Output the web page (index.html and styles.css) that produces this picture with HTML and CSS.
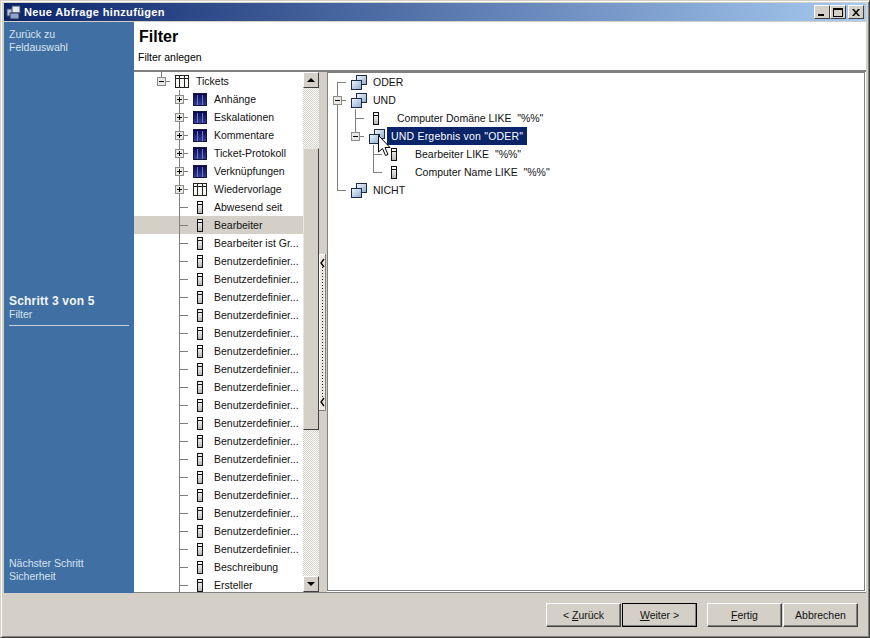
FILE: index.html
```html
<!DOCTYPE html>
<html lang="de">
  <head>
    <meta charset="UTF-8" />
    <title>Neue Abfrage hinzufügen</title>
    <link rel="stylesheet" href="styles.css">
  </head>
  <body>
    <svg class="defs" width="0" height="0">
      <defs>
        <linearGradient id="g-blue" x1="0" y1="0" x2="0" y2="1">
          <stop offset="0" stop-color="#06064e" />
          <stop offset="1" stop-color="#343f9a" />
        </linearGradient>
        <linearGradient id="g-field" x1="0" y1="0" x2="0" y2="1">
          <stop offset="0" stop-color="#ffffff" />
          <stop offset="1" stop-color="#b4b4b4" />
        </linearGradient>
        <linearGradient id="g-group" x1="0" y1="0" x2="1" y2="1">
          <stop offset="0" stop-color="#f4f8fc" />
          <stop offset="1" stop-color="#8aaad2" />
        </linearGradient>
        <symbol id="i-table" viewBox="0 0 14 13">
          <rect x="0.5" y="0.5" width="13" height="12" fill="#f8f8f4" stroke="#222" />
          <path d="M0.5 3.5H13.5M4.5 0.5V12.5M9.5 0.5V12.5" fill="none" stroke="#222" />
        </symbol>
        <symbol id="i-blue" viewBox="0 0 14 13">
          <rect x="0.5" y="0.5" width="13" height="12" fill="url(#g-blue)" stroke="#14143c" />
          <path d="M4.5 2V12M9.5 2V12" fill="none" stroke="#7078c4" />
        </symbol>
        <symbol id="i-field" viewBox="0 0 6 13">
          <rect x="0.5" y="0.5" width="5" height="12" fill="url(#g-field)" stroke="#111" />
          <path d="M0.5 3.5H5.5" fill="none" stroke="#111" />
        </symbol>
        <symbol id="i-group" viewBox="0 0 16 15">
          <rect x="5.5" y="0.5" width="10" height="9" fill="url(#g-group)" stroke="#1c2a44" />
          <rect x="0.5" y="5.5" width="10" height="9" fill="url(#g-group)" stroke="#1c2a44" />
        </symbol>
      </defs>
    </svg>

    <div class="window">
      <div class="titlebar">
        <svg class="app-icon" width="16" height="15" viewBox="0 0 16 15">
          <rect x="1" y="4" width="7" height="7" fill="#b8c4d8" stroke="#3c4c6c" />
          <rect x="6" y="1" width="8" height="7" fill="#e4e8f0" stroke="#3c4c6c" />
          <rect x="4" y="8" width="9" height="6" fill="#8ea4c8" stroke="#26324c" />
        </svg>
        <span class="title">Neue Abfrage hinzufügen</span>
        <div class="caption-btns">
          <div class="cap-btn"><span class="cap-min"></span></div>
          <div class="cap-btn"><span class="cap-max"></span></div>
          <div class="cap-btn cap-close-btn">
            <svg width="8" height="7" viewBox="0 0 8 7"><path d="M0 0H2L4 2.4L6 0H8L5 3.5L8 7H6L4 4.6L2 7H0L3 3.5Z" fill="#000" /></svg>
          </div>
        </div>
      </div>

      <div class="wizard">
        <div class="side">
          <div class="side-back">Zurück zu<br />Feldauswahl</div>
          <div class="side-step">
            <div class="step-num">Schritt 3 von 5</div>
            <div class="step-name">Filter</div>
          </div>
          <div class="side-next">Nächster Schritt<br />Sicherheit</div>
        </div>

        <div class="content">
          <div class="header">
            <div class="header-title">Filter</div>
            <div class="header-sub">Filter anlegen</div>
          </div>

          <div class="panes">
            <div class="ltree">
              <div class="row lvl1"><span class="cell ln-l"><span class="exp minus"></span></span><svg class="ic-tbl"><use href="#i-table" /></svg>Tickets</div>
              <div class="row lvl2"><span class="cell ln-t"><span class="exp plus"></span></span><svg class="ic-tbl"><use href="#i-blue" /></svg>Anhänge</div>
              <div class="row lvl2"><span class="cell ln-t"><span class="exp plus"></span></span><svg class="ic-tbl"><use href="#i-blue" /></svg>Eskalationen</div>
              <div class="row lvl2"><span class="cell ln-t"><span class="exp plus"></span></span><svg class="ic-tbl"><use href="#i-blue" /></svg>Kommentare</div>
              <div class="row lvl2"><span class="cell ln-t"><span class="exp plus"></span></span><svg class="ic-tbl"><use href="#i-blue" /></svg>Ticket-Protokoll</div>
              <div class="row lvl2"><span class="cell ln-t"><span class="exp plus"></span></span><svg class="ic-tbl"><use href="#i-blue" /></svg>Verknüpfungen</div>
              <div class="row lvl2"><span class="cell ln-t"><span class="exp plus"></span></span><svg class="ic-tbl"><use href="#i-table" /></svg>Wiedervorlage</div>
              <div class="row lvl2"><span class="cell ln-t"></span><svg class="ic-fld"><use href="#i-field" /></svg>Abwesend seit</div>
              <div class="row lvl2 selected"><span class="cell ln-t"></span><svg class="ic-fld"><use href="#i-field" /></svg>Bearbeiter</div>
              <div class="row lvl2"><span class="cell ln-t"></span><svg class="ic-fld"><use href="#i-field" /></svg>Bearbeiter ist Gr...</div>
              <div class="row lvl2"><span class="cell ln-t"></span><svg class="ic-fld"><use href="#i-field" /></svg>Benutzerdefinier...</div>
              <div class="row lvl2"><span class="cell ln-t"></span><svg class="ic-fld"><use href="#i-field" /></svg>Benutzerdefinier...</div>
              <div class="row lvl2"><span class="cell ln-t"></span><svg class="ic-fld"><use href="#i-field" /></svg>Benutzerdefinier...</div>
              <div class="row lvl2"><span class="cell ln-t"></span><svg class="ic-fld"><use href="#i-field" /></svg>Benutzerdefinier...</div>
              <div class="row lvl2"><span class="cell ln-t"></span><svg class="ic-fld"><use href="#i-field" /></svg>Benutzerdefinier...</div>
              <div class="row lvl2"><span class="cell ln-t"></span><svg class="ic-fld"><use href="#i-field" /></svg>Benutzerdefinier...</div>
              <div class="row lvl2"><span class="cell ln-t"></span><svg class="ic-fld"><use href="#i-field" /></svg>Benutzerdefinier...</div>
              <div class="row lvl2"><span class="cell ln-t"></span><svg class="ic-fld"><use href="#i-field" /></svg>Benutzerdefinier...</div>
              <div class="row lvl2"><span class="cell ln-t"></span><svg class="ic-fld"><use href="#i-field" /></svg>Benutzerdefinier...</div>
              <div class="row lvl2"><span class="cell ln-t"></span><svg class="ic-fld"><use href="#i-field" /></svg>Benutzerdefinier...</div>
              <div class="row lvl2"><span class="cell ln-t"></span><svg class="ic-fld"><use href="#i-field" /></svg>Benutzerdefinier...</div>
              <div class="row lvl2"><span class="cell ln-t"></span><svg class="ic-fld"><use href="#i-field" /></svg>Benutzerdefinier...</div>
              <div class="row lvl2"><span class="cell ln-t"></span><svg class="ic-fld"><use href="#i-field" /></svg>Benutzerdefinier...</div>
              <div class="row lvl2"><span class="cell ln-t"></span><svg class="ic-fld"><use href="#i-field" /></svg>Benutzerdefinier...</div>
              <div class="row lvl2"><span class="cell ln-t"></span><svg class="ic-fld"><use href="#i-field" /></svg>Benutzerdefinier...</div>
              <div class="row lvl2"><span class="cell ln-t"></span><svg class="ic-fld"><use href="#i-field" /></svg>Benutzerdefinier...</div>
              <div class="row lvl2"><span class="cell ln-t"></span><svg class="ic-fld"><use href="#i-field" /></svg>Benutzerdefinier...</div>
              <div class="row lvl2"><span class="cell ln-t"></span><svg class="ic-fld"><use href="#i-field" /></svg>Beschreibung</div>
              <div class="row lvl2"><span class="cell ln-t"></span><svg class="ic-fld"><use href="#i-field" /></svg>Ersteller</div>
            </div>

            <div class="scrollbar">
              <div class="sb-btn"><span class="arrow-up"></span></div>
              <div class="sb-track"><div class="sb-thumb"></div></div>
              <div class="sb-btn"><span class="arrow-down"></span></div>
            </div>

            <div class="splitter">
              <svg class="grip" width="7" height="157" viewBox="0 0 7 157">
                <rect x="0" y="0" width="7" height="157" fill="#ece9e2" />
                <path d="M0.5 157V0.5H7" fill="none" stroke="#ffffff" />
                <path d="M0 156.5H6.5V0" fill="none" stroke="#808080" />
                <path d="M3.5 13V144" fill="none" stroke="#222" stroke-dasharray="1 2" />
                <path d="M5 5L2 9L5 13M5 144L2 148L5 152" fill="none" stroke="#000" stroke-width="1.4" />
              </svg>
            </div>

            <div class="rtree">
              <div class="row"><span class="cell ln-r"></span><svg class="ic-grp"><use href="#i-group" /></svg><span class="lbl">ODER</span></div>
              <div class="row"><span class="cell ln-t"><span class="exp minus"></span></span><svg class="ic-grp"><use href="#i-group" /></svg><span class="lbl">UND</span></div>
              <div class="row"><span class="cell ln-v"></span><span class="cell ln-t"></span><svg class="ic-rfld"><use href="#i-field" /></svg><span class="lbl">Computer Domäne LIKE  "%%"</span></div>
              <div class="row"><span class="cell ln-v"></span><span class="cell ln-l"><span class="exp minus"></span></span><svg class="ic-grp"><use href="#i-group" /></svg><span class="lbl lbl-sel">UND Ergebnis von "ODER"</span></div>
              <div class="row"><span class="cell ln-v"></span><span class="cell"></span><span class="cell ln-t"></span><svg class="ic-rfld"><use href="#i-field" /></svg><span class="lbl">Bearbeiter LIKE  "%%"</span></div>
              <div class="row"><span class="cell ln-v"></span><span class="cell"></span><span class="cell ln-l"></span><svg class="ic-rfld"><use href="#i-field" /></svg><span class="lbl">Computer Name LIKE  "%%"</span></div>
              <div class="row"><span class="cell ln-l"></span><svg class="ic-grp"><use href="#i-group" /></svg><span class="lbl">NICHT</span></div>
              <svg class="cursor" width="13" height="22" viewBox="0 0 13 22">
                <path d="M0.5 0.5V17L4.5 13.5L7.5 20.5L10 19.5L7 12.5H12Z" fill="#fff" stroke="#000" />
              </svg>
            </div>
          </div>
        </div>
      </div>

      <div class="footer">
        <button class="btn">&lt; <u>Z</u>urück</button>
        <button class="btn btn-default"><u>W</u>eiter &gt;</button>
        <button class="btn btn-finish"><u>F</u>ertig</button>
        <button class="btn">Abbrechen</button>
      </div>
    </div>
  </body>
</html>
```

FILE: styles.css
```css
* {
  box-sizing: border-box;
}
html,
body {
  margin: 0;
  height: 100%;
  overflow: hidden;
}
body {
  font-family: "Liberation Sans", Arial, sans-serif;
  font-size: 10.5px;
  color: #111;
  background: #d4d0c8;
}
.defs {
  display: block;
  height: 0;
}
.window {
  height: 638px;
  display: flex;
  flex-direction: column;
  padding: 2px 3px 0 3px;
  background: #d4d0c8;
  border: 1px solid;
  border-color: #d4d0c8 #404040 #404040 #d4d0c8;
  box-shadow: inset 1px 1px 0 #fff, inset -1px -1px 0 #808080;
}

/* title bar */
.titlebar {
  height: 18px;
  margin-bottom: 1px;
  flex: none;
  display: flex;
  align-items: center;
  padding: 0 2px;
  background: linear-gradient(to right, #0a246a, #a6caf0);
}
.app-icon {
  flex: none;
}
.title {
  margin-left: 2px;
  color: #fff;
  font-weight: 700;
  font-size: 11px;
  letter-spacing: 0.35px;
}
.caption-btns {
  margin-left: auto;
  display: flex;
}
.cap-btn {
  width: 16px;
  height: 14px;
  display: flex;
  align-items: center;
  justify-content: center;
  background: #d4d0c8;
  border: 1px solid;
  border-color: #fff #404040 #404040 #fff;
}
.cap-close-btn {
  margin-left: 2px;
}
.cap-min {
  width: 6px;
  height: 2px;
  margin: 6px 3px 0 0;
  background: #000;
}
.cap-max {
  width: 10px;
  height: 9px;
  border: 1px solid #000;
  border-top-width: 2px;
}

/* wizard body */
.wizard {
  flex: none;
  height: 571px;
  display: flex;
}
.side {
  width: 130px;
  flex: none;
  display: flex;
  flex-direction: column;
  background: #3f6fa3;
  color: #d8e2ee;
  line-height: 13px;
  padding: 6px 5px 10px 5px;
}
.side-step {
  margin-top: 241px;
  padding-bottom: 4px;
  border-bottom: 1px solid #c8d0dc;
}
.step-num {
  color: #f4f6f8;
  font-weight: 700;
  font-size: 12px;
  letter-spacing: 0.2px;
}
.side-next {
  margin-top: auto;
}
.content {
  flex: 1;
  min-width: 0;
  display: flex;
  flex-direction: column;
  background: #fff;
}
.header {
  height: 48px;
  flex: none;
  padding: 6px 4px 0 4px;
}
.header-title {
  padding-left: 1px;
  font-size: 16px;
  font-weight: 700;
  line-height: 18px;
  color: #000;
}
.header-sub {
  margin-top: 4px;
  line-height: 14px;
  color: #000;
}
.panes {
  flex: 1;
  min-height: 0;
  display: flex;
  border-top: 2px solid #808080;
  border-bottom: 1px solid #808080;
}

/* trees */
.ltree {
  width: 169px;
  flex: none;
  overflow: hidden;
}
.row {
  height: 18px;
  display: flex;
  align-items: center;
  white-space: pre;
}
.lvl1 {
  padding-left: 18px;
}
.lvl2 {
  padding-left: 36px;
}
.selected {
  background: #d4d0c8;
}
.cell {
  width: 18px;
  height: 18px;
  flex: none;
  display: block;
  padding: 5px 0 0 5px;
  background-repeat: no-repeat;
}
.ln-v {
  background-image: linear-gradient(#808080, #808080);
  background-position: 9px 0;
  background-size: 1px 18px;
}
.ln-t {
  background-image: linear-gradient(#808080, #808080), linear-gradient(#808080, #808080);
  background-position: 9px 0, 9px 9px;
  background-size: 1px 18px, 9px 1px;
}
.ln-l {
  background-image: linear-gradient(#808080, #808080), linear-gradient(#808080, #808080);
  background-position: 9px 0, 9px 9px;
  background-size: 1px 10px, 9px 1px;
}
.ln-r {
  background-image: linear-gradient(#808080, #808080), linear-gradient(#808080, #808080);
  background-position: 9px 9px, 9px 9px;
  background-size: 1px 9px, 9px 1px;
}
.exp {
  display: block;
  width: 9px;
  height: 9px;
  border: 1px solid #8c8c8c;
  background-color: #e8e8e4;
  background-repeat: no-repeat;
}
.minus {
  background-image: linear-gradient(#000, #000);
  background-position: 1px 3px;
  background-size: 5px 1px;
}
.plus {
  background-image: linear-gradient(#000, #000), linear-gradient(#000, #000);
  background-position: 1px 3px, 3px 1px;
  background-size: 5px 1px, 1px 5px;
}
.ic-tbl {
  width: 14px;
  height: 13px;
  flex: none;
  margin: 0 7px 0 5px;
}
.ic-fld {
  width: 6px;
  height: 13px;
  flex: none;
  margin: 0 11px 0 9px;
}

/* scrollbar and splitter */
.scrollbar {
  width: 16px;
  flex: none;
  display: flex;
  flex-direction: column;
}
.sb-btn {
  height: 16px;
  flex: none;
  display: flex;
  align-items: center;
  justify-content: center;
  background: #d4d0c8;
  border: 1px solid;
  border-color: #fff #404040 #404040 #fff;
}
.arrow-up {
  border: 4px solid transparent;
  border-top-width: 0;
  border-bottom-color: #000;
}
.arrow-down {
  border: 4px solid transparent;
  border-bottom-width: 0;
  border-top-color: #000;
}
.sb-track {
  flex: 1;
  padding-top: 60px;
  background: repeating-conic-gradient(#d4d0c8 0 25%, #fff 0 50%) 0 0 / 2px 2px;
}
.sb-thumb {
  height: 282px;
  background: #d4d0c8;
  border: 1px solid;
  border-color: #e8e6e0 #404040 #404040 #e8e6e0;
}
.splitter {
  width: 8px;
  flex: none;
  display: flex;
  align-items: center;
  background: #d4d0c8;
}
.grip {
  display: block;
}
.rtree {
  position: relative;
  flex: 1;
  min-width: 0;
  margin: 0 1px 1px 0;
  border: 1px solid #808080;
  background: #fff;
}
.ic-grp {
  width: 16px;
  height: 15px;
  flex: none;
  margin: 1px 0 0 5px;
}
.ic-rfld {
  width: 6px;
  height: 13px;
  flex: none;
  margin: 0 12px 0 9px;
}
.lbl {
  margin-left: 2px;
  padding: 0 4px;
  line-height: 18px;
}
.lbl-sel {
  background: #0a246a;
  color: #fff;
  letter-spacing: 0.2px;
}
.cursor {
  position: absolute;
  left: 50px;
  top: 62px;
}

/* footer buttons */
.footer {
  flex: 1;
  display: flex;
  align-items: flex-start;
  justify-content: flex-end;
  gap: 1px;
  padding: 10px 8px 0 0;
}
.btn {
  width: 75px;
  height: 24px;
  padding: 0;
  font-family: inherit;
  font-size: 10.5px;
  color: #111;
  background: #d4d0c8;
  border: 1px solid;
  border-color: #fff #404040 #404040 #fff;
  box-shadow: inset -1px -1px 0 #808080;
}
.btn-default {
  outline: 1px solid #000;
  outline-offset: -1px;
}
.btn-finish {
  margin-left: 9px;
}
```
